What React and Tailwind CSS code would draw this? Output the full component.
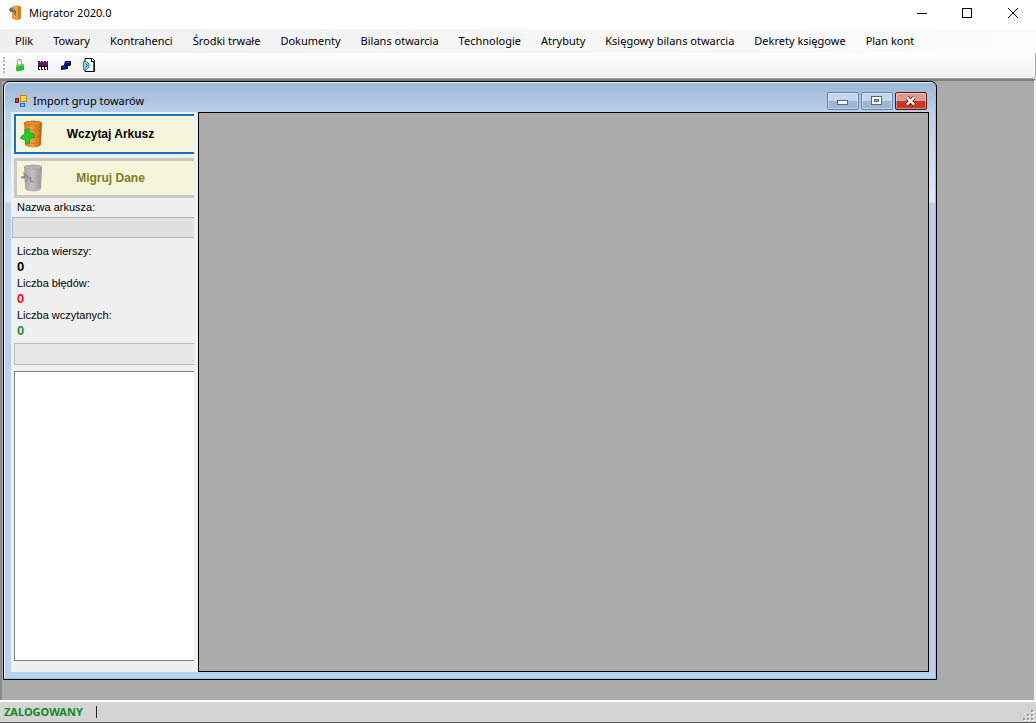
import React from "react";

const menuItems = [
  "Plik",
  "Towary",
  "Kontrahenci",
  "Środki trwałe",
  "Dokumenty",
  "Bilans otwarcia",
  "Technologie",
  "Atrybuty",
  "Księgowy bilans otwarcia",
  "Dekrety księgowe",
  "Plan kont",
];

const counters = [
  { id: "rows", label: "Liczba wierszy:", value: 0, color: "text-black" },
  { id: "errors", label: "Liczba błędów:", value: 0, color: "text-[#e0101c]" },
  { id: "loaded", label: "Liczba wczytanych:", value: 0, color: "text-[#2c8a34]" },
];

function OrangeCylinder() {
  return (
    <svg className="h-7 w-6 shrink-0" viewBox="0 0 24 28" aria-hidden="true">
      <defs>
        <linearGradient id="cylOrange" x1="0" x2="1">
          <stop offset="0" stopColor="#d97c1c" />
          <stop offset="0.45" stopColor="#f0a040" />
          <stop offset="0.8" stopColor="#d07a1c" />
          <stop offset="1" stopColor="#a65a10" />
        </linearGradient>
      </defs>
      <path d="M4 3C4 0 22 0 22 3L21 24C21 28.500 5 28.500 5 24Z" fill="url(#cylOrange)" />
      <path d="M5 9Q13 12 21.500 9M5 16Q13 19 21 16M5 22Q13 25 21 22" fill="none" stroke="#c87418" strokeWidth="0.7" />
      <ellipse cx="13" cy="3.200" rx="9" ry="2.400" fill="#c9721a" />
      <ellipse cx="13" cy="3.400" rx="7.500" ry="1.500" fill="#e09038" />
      <path d="M5 10L9 8.500V13L14 13.500V17.500L9.500 18.500V23L5.500 24V20L0.500 18.500L2 15.500L5 14Z" fill="#27cc2b" stroke="#149a1a" strokeWidth="0.8" />
    </svg>
  );
}

function GrayCylinder() {
  return (
    <svg className="h-7 w-6 shrink-0" viewBox="0 0 24 28" aria-hidden="true">
      <defs>
        <linearGradient id="cylGray" x1="0" x2="1">
          <stop offset="0" stopColor="#a8a8a8" />
          <stop offset="0.45" stopColor="#c0c0c0" />
          <stop offset="1" stopColor="#969696" />
        </linearGradient>
      </defs>
      <path d="M4 3C4 0 22 0 22 3L21 24C21 28.500 5 28.500 5 24Z" fill="url(#cylGray)" />
      <ellipse cx="13" cy="3.200" rx="9" ry="2.400" fill="#a6a6a6" />
      <ellipse cx="13" cy="3.400" rx="7.500" ry="1.500" fill="#b4b4b4" />
      <path d="M0.500 13L4 11.500L3 8L6.500 10L10.500 15L7.500 14L5 14.500L1.500 14.500Z" fill="#909090" />
      <path d="M5 17.500L7.500 16M10.500 13V17.500H14" fill="none" stroke="#868686" strokeWidth="1.200" />
    </svg>
  );
}

function AppIcon() {
  return (
    <svg className="h-4 w-4" viewBox="0 0 16 16" aria-hidden="true">
      <path d="M5 2C5 0 14 0 14 2V13C14 15.500 5 15.500 5 13Z" fill="#e8a03a" />
      <path d="M11 1L14 2V13L11 14.500Z" fill="#cc8020" />
      <path d="M2 4L5 2L6 4L9 6L9 11L7 9L7 7L3 7Z" fill="#64707c" />
    </svg>
  );
}

function FormIcon() {
  return (
    <svg className="h-3 w-3" viewBox="0 0 12 12" aria-hidden="true">
      <rect x="0.500" y="3.500" width="3" height="4" fill="#d9352a" stroke="#8e1b14" />
      <rect x="5.500" y="0.500" width="6" height="6" fill="#fbd34b" stroke="#b58a1c" />
      <rect x="5.500" y="8.500" width="4" height="3" fill="#7fb0f5" stroke="#3c68b8" />
    </svg>
  );
}

const tool = "flex h-5 w-[23px] items-center justify-center";
const frameButton =
  "flex h-[18px] w-8 items-center justify-center rounded-xs border border-[#6583a8] bg-linear-to-b from-[#c3d6ec] from-50% to-[#9bb6d6] to-50% ring-1 ring-white/40 ring-inset";

export default function App() {
  return (
    <div className="flex h-screen flex-col overflow-hidden bg-white font-['Noto_Sans','Open_Sans',sans-serif] text-[11px] leading-4 text-black">
      <header className="flex h-[29px] shrink-0 items-center">
        <div className="flex flex-1 items-center gap-[6px] pb-1 pl-[7px]">
          <AppIcon />
          <h1>Migrator 2020.0</h1>
        </div>
        <button aria-label="Minimalizuj" className="flex h-[26px] w-[45px] items-center justify-center self-start">
          <svg className="h-3 w-3" viewBox="0 0 12 12"><path d="M0 6.500H10" stroke="#000" /></svg>
        </button>
        <button aria-label="Maksymalizuj" className="flex h-[26px] w-[45px] items-center justify-center self-start">
          <svg className="h-3 w-3" viewBox="0 0 12 12"><rect x="0.500" y="1.500" width="9" height="9" fill="none" stroke="#000" /></svg>
        </button>
        <button aria-label="Zamknij" className="flex h-[26px] w-[46px] items-center justify-center self-start">
          <svg className="h-3 w-3" viewBox="0 0 12 12"><path d="M1 1L11 11M11 1L1 11" stroke="#000" /></svg>
        </button>
      </header>

      <nav className="flex h-6 shrink-0 items-center gap-5 bg-linear-to-r from-[#f0f0f0] to-[#fcfcfc] pl-[15px]">
        {menuItems.map((m) => (
          <button key={m} className="whitespace-nowrap">{m}</button>
        ))}
      </nav>

      <div role="toolbar" aria-label="Narzędzia" className="flex h-[26px] shrink-0 items-center rounded-br border-r border-b border-[#a8a8a8] bg-linear-to-b from-[#fdfdfd] to-[#f2f2f2] pb-px pl-[3px]">
        <div className="mr-[3px] h-4 border-l-2 border-dotted border-[#b8b8b8]" />
        <button aria-label="Logowanie" className={tool}>
          <svg className="h-4 w-4" viewBox="0 0 16 16">
            <path d="M5.500 8V4.500Q5.500 2.500 7.500 2.500T9.500 5V7" fill="none" stroke="#a4b4a4" strokeWidth="1.400" />
            <path d="M4 8L12 7V13L5 14.500L4 13Z" fill="#2db82f" />
            <path d="M4 8L12 7V8.500L4 10Z" fill="#69d85c" />
          </svg>
        </button>
        <button aria-label="Towary" className={tool}>
          <svg className="h-4 w-4" viewBox="0 0 16 16">
            <path d="M3 4.500H13" stroke="#3c1040" strokeDasharray="2 1" />
            <rect x="3" y="5" width="10" height="4" fill="#651a64" />
            <rect x="3" y="9" width="10" height="1" fill="#000" />
            <path d="M3 11H13" stroke="#000" strokeWidth="2" strokeDasharray="1 2" />
            <path d="M3 12.500H13" stroke="#000" strokeDasharray="2 1" />
          </svg>
        </button>
        <button aria-label="Kontrahenci" className={tool}>
          <svg className="h-4 w-4" viewBox="0 0 16 16">
            <path d="M7 4H13V8L12 9H10V12L3 13V9L6 8Z" fill="#061058" />
            <path d="M8 5.500H12M4 10H8" stroke="#2858b0" />
          </svg>
        </button>
        <button aria-label="Wyjście" className={tool}>
          <svg className="h-4 w-4" viewBox="0 0 16 16">
            <path d="M4 1.500H11.500L13.500 3.500V14.500H4Z" fill="#fff" stroke="#000" />
            <path d="M10.500 1V4.500H14" fill="none" stroke="#000" />
            <path d="M13 4V14.500" stroke="#222" strokeWidth="1.500" />
            <path d="M2.500 4.500H5.500L8 7V10L5.500 12.500H2.500Z" fill="#8ed8dc" stroke="#3c7c84" />
            <path d="M4.500 6.500L6.500 8.500L4.500 10.500" fill="none" stroke="#1b6970" />
          </svg>
        </button>
      </div>

      <main className="flex min-h-0 flex-1 border-x-2 border-t-2 border-t-[#7e7e7e] border-r-[#f4f4f4] border-l-[#8a8a8a] bg-[#ababab] pr-[97px] pb-5 pl-px">
        <section className="flex min-w-0 flex-1 flex-col rounded-t-md border border-black bg-[linear-gradient(to_bottom,#9bb7d7_0,#b9d1ea_30px,#dfeaf8_120px,#b9d1ea_121px)] px-[7px] pb-[7px] shadow-[inset_1px_1px_0_#e6f2fc,inset_-1px_-1px_0_#6fd3ee]">
          <div className="flex h-[30px] shrink-0 items-center pt-[7px] pl-1">
            <FormIcon />
            <h2 className="ml-[6px] flex-1">Import grup towarów</h2>
            <div className="mr-[2px] flex gap-[2px]">
              <button aria-label="Minimalizuj okno" className={frameButton}>
                <svg className="h-3 w-3" viewBox="0 0 12 12"><rect x="0.500" y="5.500" width="10" height="4" fill="#fff" stroke="#53657c" /></svg>
              </button>
              <button aria-label="Maksymalizuj okno" className={frameButton}>
                <svg className="h-3 w-3" viewBox="0 0 12 12">
                  <rect x="0.500" y="1.500" width="10" height="8" fill="#fff" stroke="#53657c" />
                  <rect x="3.500" y="4.500" width="4" height="2" fill="#a9c0dc" stroke="#53657c" />
                </svg>
              </button>
              <button
                aria-label="Zamknij okno"
                className="flex h-[18px] w-8 items-center justify-center rounded-xs border border-[#5c1414] bg-linear-to-b from-[#e09a8c] from-50% to-[#c03c24] to-50% ring-1 ring-white/40 ring-inset"
              >
                <svg className="h-3 w-3" viewBox="0 0 12 12">
                  <path d="M2 2.500L9 9.500M9 2.500L2 9.500" stroke="#5c2626" strokeWidth="4" />
                  <path d="M2 2.500L9 9.500M9 2.500L2 9.500" stroke="#fff" strokeWidth="2.400" />
                </svg>
              </button>
            </div>
          </div>

          <div className="flex min-h-0 flex-1">
            <aside className="flex w-[187px] shrink-0 flex-col bg-[#f0f0f0] pr-1 font-['Liberation_Sans',Arial,sans-serif]">
              <div className="flex flex-col gap-1 pt-[2px] pl-[3px]">
                <button className="flex h-10 items-center border-y-2 border-l-2 border-[#1373c4] bg-[#f5f5dc] pl-1 text-[12px] font-bold">
                  <OrangeCylinder />
                  <span className="flex-1 pr-[17px] text-center">Wczytaj Arkusz</span>
                </button>
                <button disabled className="flex h-10 items-center border-y-3 border-l-3 border-[#c9c9c6] bg-[#f5f5dc] pl-[3px] text-[12px] font-bold text-[#7d7d22]">
                  <GrayCylinder />
                  <span className="flex-1 pr-[17px] text-center">Migruj Dane</span>
                </button>
              </div>
              <label htmlFor="sheet" className="mt-px pl-[6px]">Nazwa arkusza:</label>
              <select id="sheet" disabled className="mt-[2px] ml-px h-[21px] appearance-none border-y border-l border-[#b4b4b4] bg-[#e1e1e1]" />
              <dl className="mt-[5px] pl-[6px]">
                {counters.map((c) => (
                  <React.Fragment key={c.id}>
                    <dt>{c.label}</dt>
                    <dd className={`text-[13px] font-bold ${c.color}`}>{c.value}</dd>
                  </React.Fragment>
                ))}
              </dl>
              <div role="progressbar" aria-label="Postęp" aria-valuenow={0} className="mt-1 ml-[3px] h-[22px] shrink-0 border-y border-l border-[#bcbcbc] bg-[#e6e6e6]" />
              <textarea aria-label="Dziennik" readOnly className="mt-[6px] mb-[11px] ml-[3px] min-h-0 flex-1 resize-none border-y border-l border-[#828282] bg-white" />
            </aside>
            <div role="region" aria-label="Arkusz" className="min-w-0 flex-1 border border-black bg-[#ababab]" />
          </div>
        </section>
      </main>

      <footer className="flex h-[23px] shrink-0 items-center border-t-2 border-b border-t-white border-b-[#555] bg-[#d4d4d4] pl-1">
        <span className="font-bold text-[#138a1d]">ZALOGOWANY</span>
        <span className="ml-[13px] h-3 w-px bg-[#222]" />
        <svg className="mr-px ml-auto h-3 w-3 self-end" viewBox="0 0 12 12" aria-hidden="true">
          <path d="M9 1h2v2h-2zM5 5h2v2h-2zM9 5h2v2h-2zM1 9h2v2h-2zM5 9h2v2h-2zM9 9h2v2h-2z" fill="#fff" />
          <path d="M8 0h2v2h-2zM4 4h2v2h-2zM8 4h2v2h-2zM0 8h2v2h-2zM4 8h2v2h-2zM8 8h2v2h-2z" fill="#9a9a9a" />
        </svg>
      </footer>
    </div>
  );
}
